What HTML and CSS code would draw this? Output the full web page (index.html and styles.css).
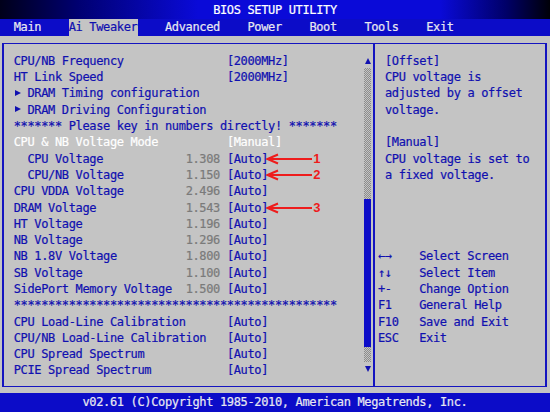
FILE: index.html
```html
<!DOCTYPE html>
<html>
<head>
<meta charset="utf-8">
<link rel="stylesheet" href="styles.css">
</head>
<body>
<div class="screen">
  <header class="title">BIOS SETUP UTILITY</header>
  <nav class="menu">
    <span class="tab">Main</span>
    <span class="tab active">Ai Tweaker</span>
    <span class="tab">Advanced</span>
    <span class="tab">Power</span>
    <span class="tab">Boot</span>
    <span class="tab">Tools</span>
    <span class="tab">Exit</span>
  </nav>
  <main class="main">
    <div class="frame">
      <section class="left">
        <div class="rows">
          <div class="row"><span class="lbl">CPU/NB Frequency</span><span class="num"></span><span class="val">[2000MHz]</span></div>
          <div class="row"><span class="lbl">HT Link Speed</span><span class="num"></span><span class="val">[2000MHz]</span></div>
          <div class="row"><span class="lbl wide"><span class="tri"><i></i></span>DRAM Timing configuration</span></div>
          <div class="row"><span class="lbl wide"><span class="tri"><i></i></span>DRAM Driving Configuration</span></div>
          <div class="row"><span class="lbl full">******* Please key in numbers directly! *******</span></div>
          <div class="row hl"><span class="lbl">CPU &amp; NB Voltage Mode</span><span class="num"></span><span class="val">[Manual]</span></div>
          <div class="row"><span class="lbl sub">CPU Voltage</span><span class="num">1.308</span><span class="val">[Auto]<svg class="arrow" viewBox="0 0 46 12" width="46" height="12"><path d="M1 6H46M12 1.5L1.5 6L12 10.5" fill="none" stroke="#ee1c1c" stroke-width="2"/></svg><b class="mark">1</b></span></div>
          <div class="row"><span class="lbl sub">CPU/NB Voltage</span><span class="num">1.150</span><span class="val">[Auto]<svg class="arrow" viewBox="0 0 46 12" width="46" height="12"><path d="M1 6H46M12 1.5L1.5 6L12 10.5" fill="none" stroke="#ee1c1c" stroke-width="2"/></svg><b class="mark">2</b></span></div>
          <div class="row"><span class="lbl">CPU VDDA Voltage</span><span class="num">2.496</span><span class="val">[Auto]</span></div>
          <div class="row"><span class="lbl">DRAM Voltage</span><span class="num">1.543</span><span class="val">[Auto]<svg class="arrow" viewBox="0 0 46 12" width="46" height="12"><path d="M1 6H46M12 1.5L1.5 6L12 10.5" fill="none" stroke="#ee1c1c" stroke-width="2"/></svg><b class="mark">3</b></span></div>
          <div class="row"><span class="lbl">HT Voltage</span><span class="num">1.196</span><span class="val">[Auto]</span></div>
          <div class="row"><span class="lbl">NB Voltage</span><span class="num">1.296</span><span class="val">[Auto]</span></div>
          <div class="row"><span class="lbl">NB 1.8V Voltage</span><span class="num">1.800</span><span class="val">[Auto]</span></div>
          <div class="row"><span class="lbl">SB Voltage</span><span class="num">1.100</span><span class="val">[Auto]</span></div>
          <div class="row"><span class="lbl">SidePort Memory Voltage</span><span class="num">1.500</span><span class="val">[Auto]</span></div>
          <div class="row"><span class="lbl full">***********************************************</span></div>
          <div class="row"><span class="lbl wide">CPU Load-Line Calibration</span><span class="val">[Auto]</span></div>
          <div class="row"><span class="lbl wide">CPU/NB Load-Line Calibration</span><span class="val">[Auto]</span></div>
          <div class="row"><span class="lbl wide">CPU Spread Spectrum</span><span class="val">[Auto]</span></div>
          <div class="row"><span class="lbl wide">PCIE Spread Spectrum</span><span class="val">[Auto]</span></div>
        </div>
        <div class="scrollbar">
          <div class="sb-btn"><i class="up"></i></div>
          <div class="track"><div class="thumb"></div></div>
          <div class="sb-btn down-btn"><i class="down"></i></div>
        </div>
      </section>
      <aside class="right">
        <div class="help">
          <div class="line">[Offset]</div>
          <div class="line">CPU voltage is</div>
          <div class="line">adjusted by a offset</div>
          <div class="line">voltage.</div>
          <div class="line">&nbsp;</div>
          <div class="line">[Manual]</div>
          <div class="line">CPU voltage is set to</div>
          <div class="line">a fixed voltage.</div>
        </div>
        <div class="keys">
          <span class="key">←→</span><span class="desc">Select Screen</span>
          <span class="key">↑↓</span><span class="desc">Select Item</span>
          <span class="key">+-</span><span class="desc">Change Option</span>
          <span class="key">F1</span><span class="desc">General Help</span>
          <span class="key">F10</span><span class="desc">Save and Exit</span>
          <span class="key">ESC</span><span class="desc">Exit</span>
        </div>
      </aside>
    </div>
  </main>
  <footer class="footer">v02.61 (C)Copyright 1985-2010, American Megatrends, Inc.</footer>
</div>
</body>
</html>
```

FILE: styles.css
```css
* {
  box-sizing: border-box;
  margin: 0;
  padding: 0;
}

html, body {
  width: 550px;
  height: 412px;
  overflow: hidden;
}

body {
  background: #c4c4c4;
  font-family: "DejaVu Sans Mono", "Liberation Mono", monospace;
  font-size: 12px;
  letter-spacing: -0.35px;
  color: #1010b0;
  -webkit-text-stroke: 0.2px currentColor;
}

.screen {
  width: 550px;
  height: 412px;
  display: flex;
  flex-direction: column;
}

.title {
  height: 19px;
  padding-top: 2px;
  line-height: 17px;
  text-align: center;
  color: #ffffff;
  background: linear-gradient(to right, #00001a 0%, #000070 14%, #0a0ad8 36%, #0a0ad8 80%, #000068 92%, #000008 100%);
}

.menu {
  height: 17px;
  display: flex;
  gap: 27.5px;
  padding-left: 13.75px;
  line-height: 17px;
  background: #0c0cc8;
  color: #e8e8f0;
  white-space: pre;
}

.tab.active {
  background: #c4c4c4;
  color: #1010b0;
}

.main {
  flex: 1;
  padding: 7px 2px 6px 2px;
}

.frame {
  width: 545px;
  height: 344px;
  display: flex;
  border: 2px solid #1414c0;
  border-top-width: 1px;
  border-bottom-width: 1px;
}

.left {
  width: 371px;
  display: flex;
  border-right: 2px solid #1414c0;
  padding-right: 2px;
}

.rows {
  flex: 1;
  padding-top: 8.85px;
  padding-left: 9.75px;
}

.row {
  height: 16.3px;
  line-height: 16.3px;
  display: grid;
  grid-template-columns: 171.875px 41.25px auto;
  white-space: pre;
}

.lbl.sub {
  padding-left: 13.75px;
}

.lbl.wide {
  grid-column: 1 / 3;
}

.lbl.full {
  grid-column: 1 / 4;
}

.num {
  color: #7a7a7a;
}

.val {
  display: flex;
  align-items: center;
}

.row.hl .lbl,
.row.hl .val {
  color: #ffffff;
}

.tri {
  display: inline-block;
  width: 13.75px;
  height: 16.3px;
  vertical-align: top;
}

.tri i {
  display: block;
  width: 0;
  height: 0;
  margin-top: 4.5px;
  margin-left: 1px;
  border-left: 6px solid #1010b0;
  border-top: 3.5px solid transparent;
  border-bottom: 3.5px solid transparent;
}

.arrow {
  display: block;
  margin-left: -2px;
}

.mark {
  font-family: "Liberation Sans", Arial, sans-serif;
  font-weight: bold;
  font-size: 13px;
  letter-spacing: 0;
  color: #ee1c1c;
  margin-left: 1px;
  -webkit-text-stroke: 0;
}

.scrollbar {
  width: 7px;
  display: flex;
  flex-direction: column;
  padding-top: 13px;
}

.sb-btn {
  height: 8px;
  display: flex;
  align-items: center;
  justify-content: center;
}

.sb-btn .up {
  display: block;
  width: 0;
  height: 0;
  border-left: 3px solid transparent;
  border-right: 3px solid transparent;
  border-bottom: 6px solid #1010b0;
}

.sb-btn .down {
  display: block;
  width: 0;
  height: 0;
  border-left: 3px solid transparent;
  border-right: 3px solid transparent;
  border-top: 6px solid #1010b0;
}

.track {
  margin-top: 3px;
  height: 294px;
  background: repeating-conic-gradient(#8c8c8c 0 25%, #c4c4c4 0 50%) 0 0 / 2px 2px;
}

.thumb {
  margin-top: 131px;
  height: 148px;
  background: #0c0cc8;
}

.down-btn {
  margin-top: 3px;
}

.right {
  flex: 1;
  padding-top: 8.85px;
  display: flex;
  flex-direction: column;
}

.help {
  padding-left: 10px;
}

.line {
  height: 16.3px;
  line-height: 16.3px;
  white-space: pre;
}

.keys {
  margin-top: 65.2px;
  padding-left: 3px;
  display: grid;
  grid-template-columns: 41.25px auto;
  grid-auto-rows: 16.3px;
  line-height: 16.3px;
  white-space: pre;
}

.footer {
  height: 19px;
  line-height: 19px;
  text-align: center;
  background: #0c0cc8;
  color: #e8e8f0;
  white-space: pre;
}
```
